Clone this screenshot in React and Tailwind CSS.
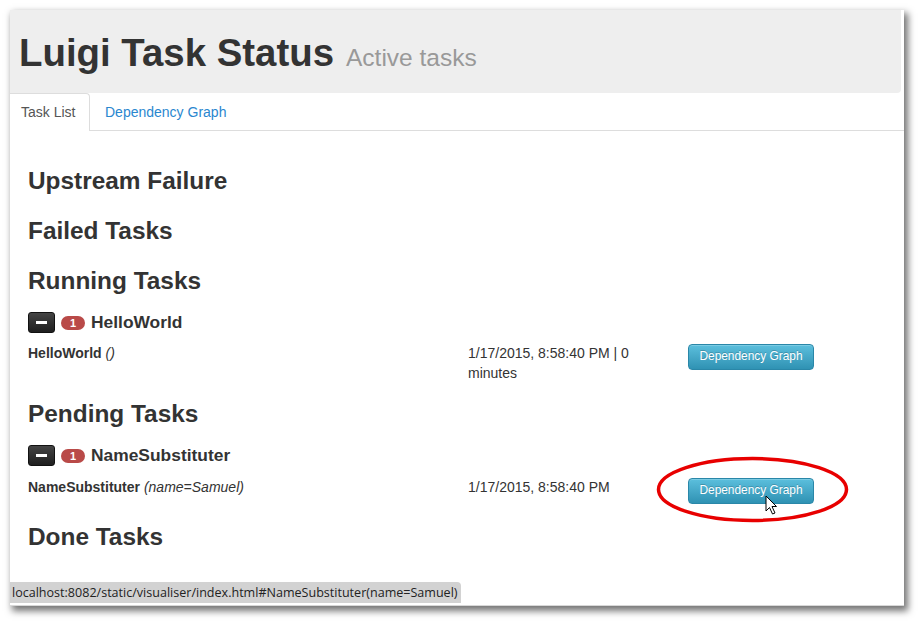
import React from "react";

const tasks = [
  {
    section: "Running Tasks",
    name: "HelloWorld",
    params: "()",
    time: "1/17/2015, 8:58:40 PM | 0 minutes",
  },
  {
    section: "Pending Tasks",
    name: "NameSubstituter",
    params: "(name=Samuel)",
    time: "1/17/2015, 8:58:40 PM",
  },
];

const GraphButton = () => (
  <button className="w-[126px] h-[26px] rounded-[4px] border border-[#2a87a8] bg-gradient-to-b from-[#5bbfdd] to-[#2f92b3] text-white text-[11.9px] leading-none [text-shadow:0_-1px_0_rgba(0,0,0,0.2)] shadow-[inset_0_1px_0_rgba(255,255,255,0.2)]">
    Dependency Graph
  </button>
);

const GroupHeader = ({ name }) => (
  <div className="flex items-center h-[21px] gap-[6px]">
    <div className="w-[27px] h-[21px] rounded-[3px] bg-gradient-to-b from-[#444] to-[#1f1f1f] border border-[#111] flex items-center justify-center">
      <div className="w-[11px] h-[3px] bg-white" />
    </div>
    <span className="w-[24px] h-[14px] rounded-full bg-[#b94a48] text-white text-[11px] font-bold leading-[14px] text-center">
      1
    </span>
    <span className="text-[17.4px] font-bold text-[#333] leading-[21px]">{name}</span>
  </div>
);

export default function App() {
  return (
    <div className="w-[920px] h-[624px] bg-white p-[10px] overflow-hidden font-['Liberation_Sans',Arial,sans-serif] text-[#333]">
      <div className="relative w-[894px] h-[596px] bg-white border-b border-[#d8d8d8] shadow-[3px_4px_7px_1px_rgba(0,0,0,0.55)]">
        {/* header */}
        <div className="h-[83px] bg-[#eee] rounded-br-[4px] mr-[3px] pl-[9px] pt-[24px] flex items-baseline gap-[12px]">
          <h1 className="text-[38.4px] font-bold leading-[38px] text-[#333]">Luigi Task Status</h1>
          <span className="text-[24.5px] leading-[38px] text-[#999]">Active tasks</span>
        </div>

        {/* tabs */}
        <div className="flex h-[38px] border-b border-[#ddd] text-[14px] leading-[20px]">
          <div className="w-[80px] -mb-px h-[38px] bg-white border-t border-r border-[#ddd] rounded-tr-[4px] pl-[11px] pt-[8px] text-[#555]">
            Task List
          </div>
          <div className="pl-[15px] pt-[9px] text-[#2a87cf]">Dependency Graph</div>
        </div>

        {/* content */}
        <div className="pl-[18px] pr-[18px]">
          <h2 className="mt-[37px] text-[24.4px] font-bold leading-[26px]">Upstream Failure</h2>
          <h2 className="mt-[24px] text-[24.4px] font-bold leading-[26px]">Failed Tasks</h2>

          {tasks.map((t, i) => (
            <div key={t.name}>
              <h2 className={`${i === 0 ? "mt-[24px]" : "mt-[18px]"} text-[24.4px] font-bold leading-[26px]`}>
                {t.section}
              </h2>
              <div className="mt-[18px]">
                <GroupHeader name={t.name} />
              </div>
              <div className={`${i === 0 ? "mt-[10px]" : "mt-[11px]"} flex text-[14px] leading-[20px]`}>
                <div className="w-[440px]">
                  <span className="font-bold">{t.name}</span> <i>{t.params}</i>
                </div>
                <div className="w-[220px] pr-[40px]">{t.time}</div>
                <div className="pt-[1px]">
                  <GraphButton />
                </div>
              </div>
            </div>
          ))}

          <h2 className="mt-[20px] text-[24.4px] font-bold leading-[26px]">Done Tasks</h2>
        </div>

        {/* highlight ellipse */}
        <svg className="absolute left-[645px] top-[445px]" width="205" height="70" viewBox="0 0 205 70">
          <ellipse cx="97.5" cy="34.5" rx="94" ry="31" fill="none" stroke="#e80000" strokeWidth="3.5" />
        </svg>

        {/* mouse cursor */}
        <svg className="absolute left-[755px] top-[485px]" width="14" height="21" viewBox="0 0 14 21">
          <path d="M1 1 L1 16 L4.5 12.5 L7.5 19 L10 18 L7 11.5 L11.5 11.5 Z" fill="#fff" stroke="#000" strokeWidth="1" strokeLinejoin="round" />
        </svg>

        {/* status bar */}
        <div className="absolute left-0 bottom-[2px] h-[21px] bg-[#d2d2d2] rounded-tr-[4px] pl-[2px] pr-[3px] text-[12.55px] leading-[21px] text-[#222] font-['Open_Sans','Noto_Sans',sans-serif]">
          localhost:8082/static/visualiser/index.html#NameSubstituter(name=Samuel)
        </div>
      </div>
    </div>
  );
}
